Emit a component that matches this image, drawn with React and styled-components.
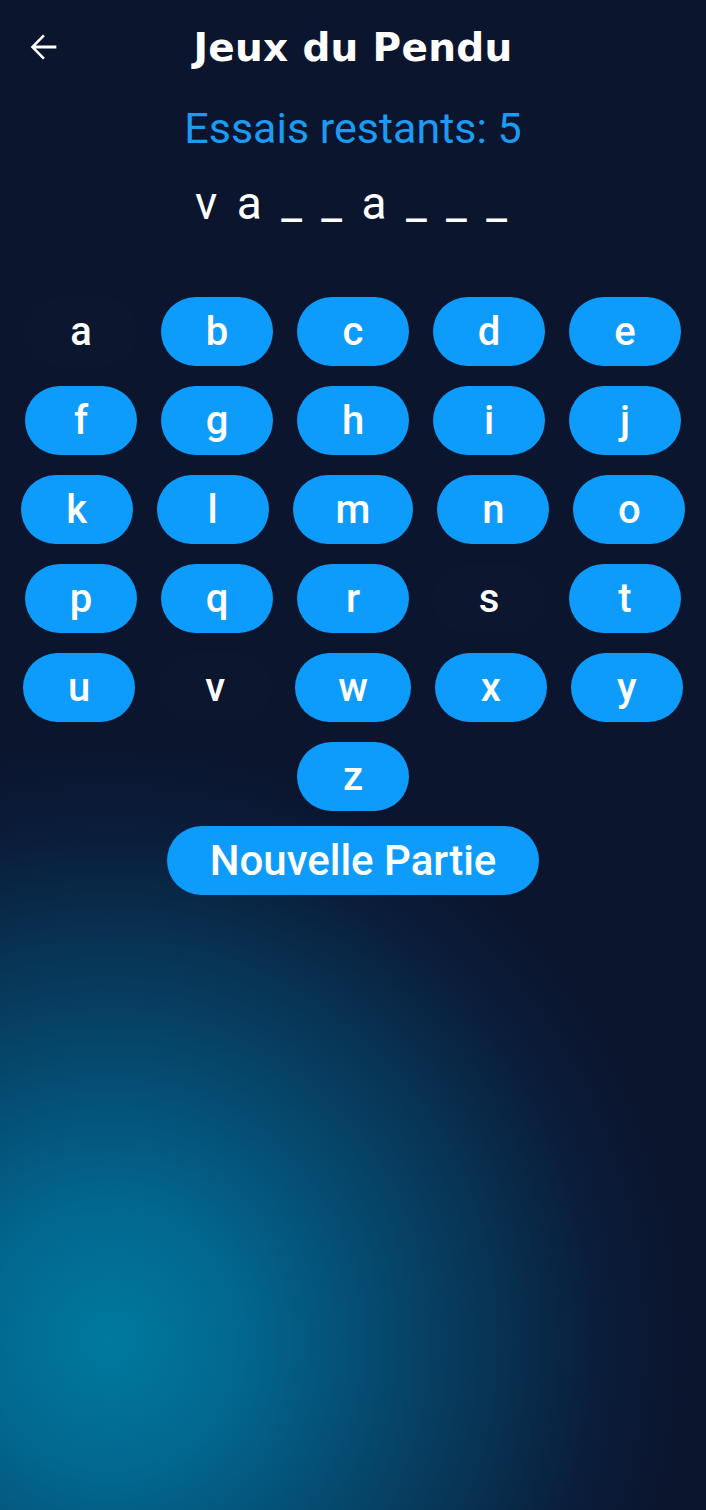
import React, { useState } from "react"
import styled, { createGlobalStyle } from "styled-components"

const GlobalStyle = createGlobalStyle`
    html, body {
        margin: 0;
        padding: 0;
        background: #0b152e;
    }
    * {
        box-sizing: border-box;
    }
`

const Screen = styled.div`
    min-height: 100vh;
    background:
        radial-gradient(ellipse 570px 590px at 110px 1340px,
            #00799f 0%,
            #026890 22%,
            #054c72 45%,
            #083252 68%,
            #0a1d3b 86%,
            rgba(11, 21, 46, 0) 100%),
        #0b152e;
    font-family: Roboto, "Liberation Sans", sans-serif;
    color: #fff;
    display: flex;
    flex-direction: column;
    align-items: center;
`

const Header = styled.header`
    position: relative;
    width: 100%;
    height: 94px;
    display: flex;
    align-items: center;
    justify-content: center;
`

const BackButton = styled.button`
    position: absolute;
    left: 23px;
    top: 27px;
    width: 40px;
    height: 40px;
    padding: 0;
    border: none;
    background: none;
    color: #fff;
    cursor: pointer;
    svg {
        display: block;
    }
`

const Title = styled.h1`
    margin: 0;
    font-family: "DejaVu Sans", sans-serif;
    font-weight: 700;
    font-size: 39px;
    letter-spacing: 0.3px;
`

const Tries = styled.div`
    margin-top: 9px;
    font-size: 43px;
    line-height: 50px;
    color: #1c9bf2;
`

const Word = styled.div`
    margin-top: 24px;
    font-size: 46px;
    line-height: 52px;
    letter-spacing: 4px;
    white-space: pre;
`

const Keyboard = styled.div`
    margin-top: 68px;
    width: 100%;
    display: flex;
    flex-direction: column;
    gap: 20px;
`

const Row = styled.div`
    display: flex;
    justify-content: center;
    gap: 24px;
`

const Key = styled.button`
    min-width: 112px;
    height: 69px;
    padding: 0 43px;
    border: none;
    border-radius: 35px;
    font-family: Roboto, "Liberation Sans", sans-serif;
    font-weight: 500;
    font-size: 40px;
    color: #fff;
    background: ${({ $used }) => $used ? "rgba(255, 255, 255, 0.006)" : "#0d9bfc"};
    cursor: ${({ $used }) => $used ? "default" : "pointer"};
    display: flex;
    align-items: center;
    justify-content: center;
`

const NewGame = styled(Key)`
    margin-top: 15px;
    font-size: 42px;
`

const rows = ["abcde", "fghij", "klmno", "pqrst", "uvwxy", "z"]
const secret = "vantarde"

const App = () => {
    const [ guessed, setGuessed ] = useState(["a", "s", "v"])

    const word = secret.split("").map(c => guessed.includes(c) ? c : "_").join(" ")

    return (
        <Screen>
            <GlobalStyle />
            <Header>
                <BackButton aria-label="retour">
                    <svg width="40" height="40" viewBox="0 0 24 24" fill="currentColor">
                        <path d="M20 11.1H7.6l5.5-5.5-1.1-1.1-7.4 7.5 7.4 7.5 1.1-1.1-5.5-5.5H20z" />
                    </svg>
                </BackButton>
                <Title>Jeux du Pendu</Title>
            </Header>
            <Tries>Essais restants: 5</Tries>
            <Word>{word}</Word>
            <Keyboard>
                {rows.map(row => (
                    <Row key={row}>
                        {row.split("").map(l => (
                            <Key
                                key={l}
                                $used={guessed.includes(l)}
                                onClick={() => setGuessed(prev => prev.includes(l) ? prev : [...prev, l])}
                            >
                                {l}
                            </Key>
                        ))}
                    </Row>
                ))}
            </Keyboard>
            <NewGame onClick={() => setGuessed([])}>Nouvelle Partie</NewGame>
        </Screen>
    )
}

export default App
